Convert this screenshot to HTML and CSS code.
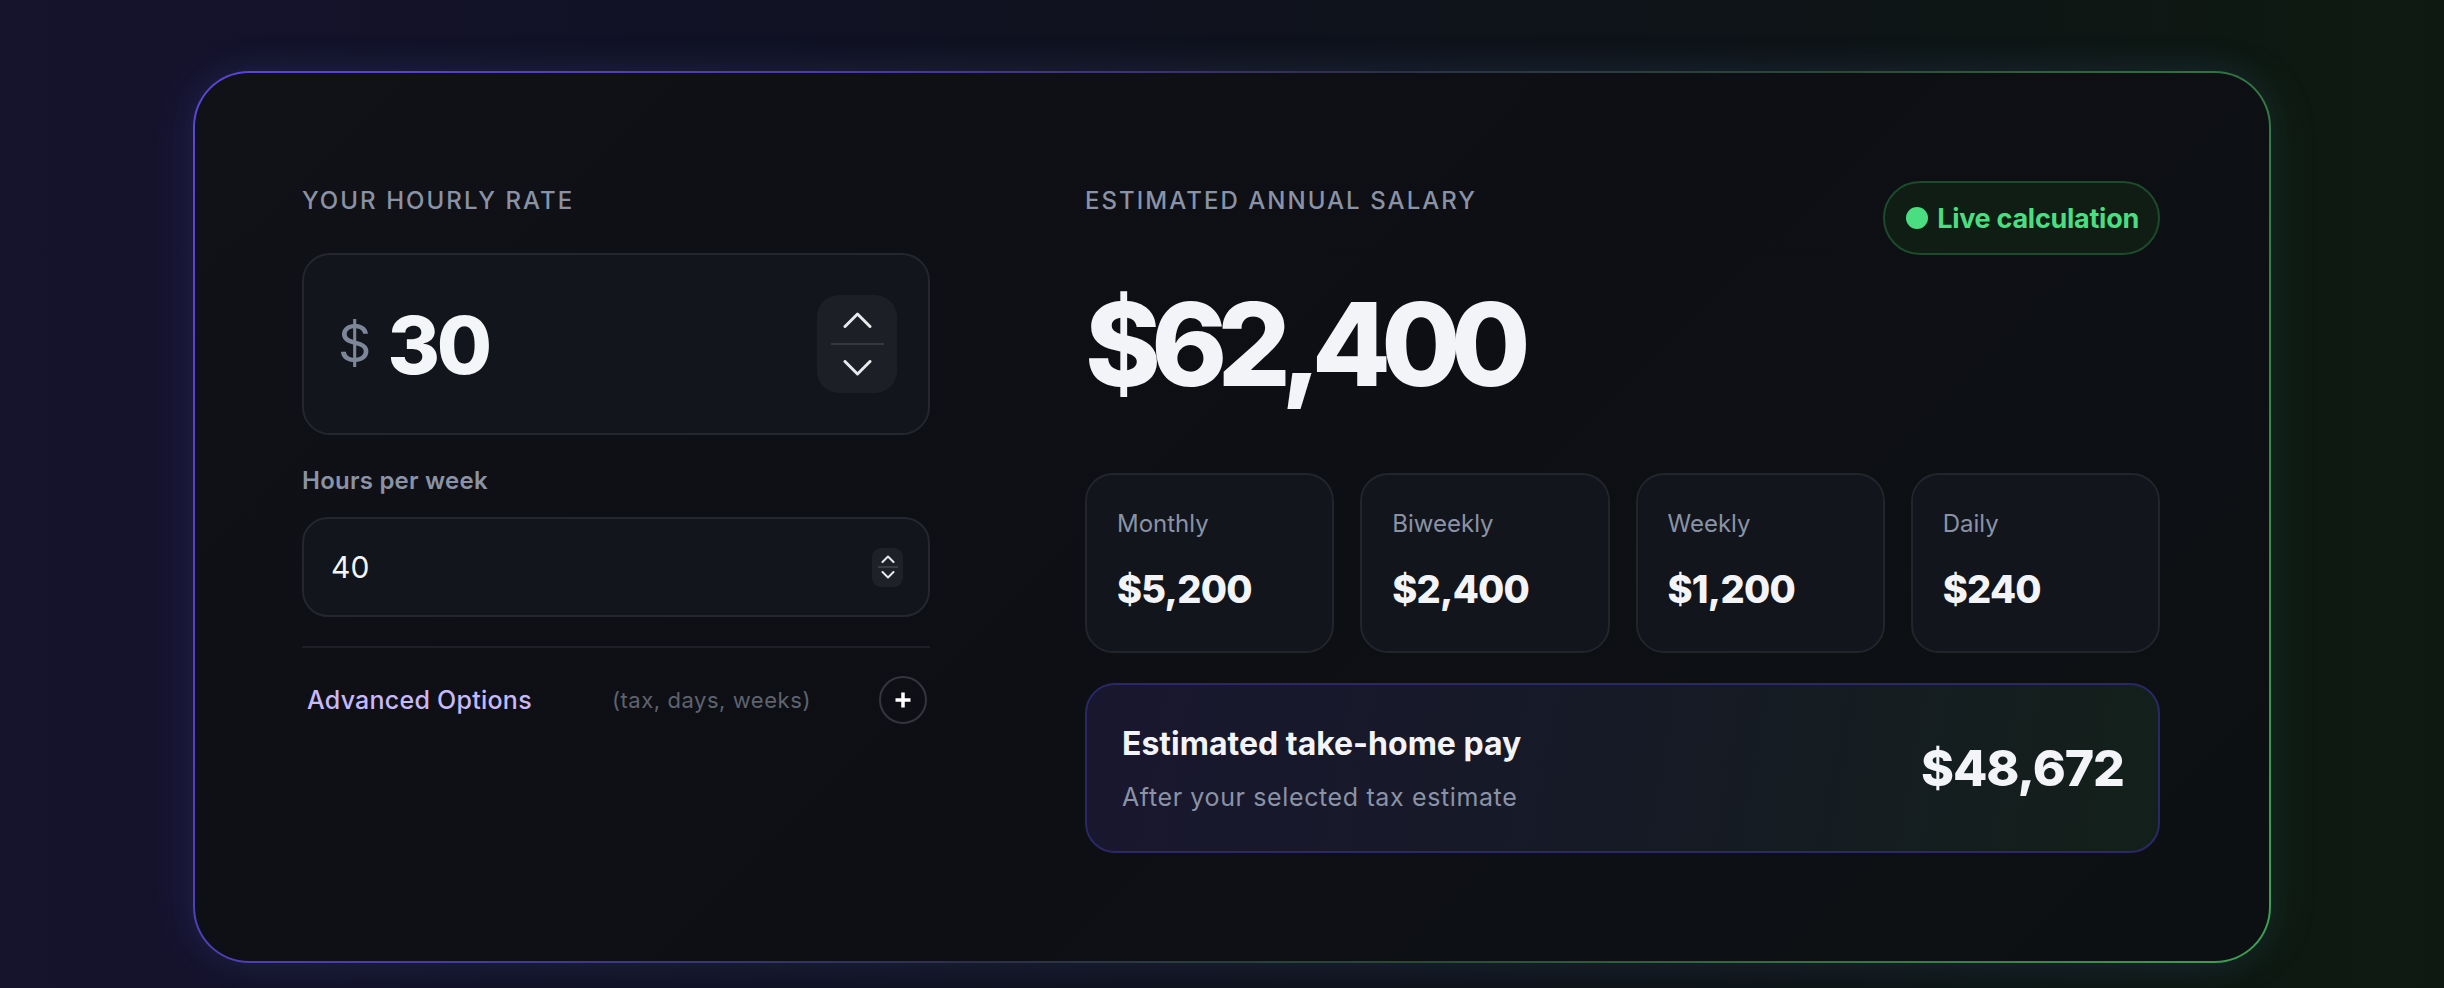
FILE: index.html
```html
<!DOCTYPE html>
<html lang="en">
<head>
    <meta charset="UTF-8">
    <meta name="viewport" content="width=device-width, initial-scale=1.0">
    <title>Hourly to Salary Calculator</title>
    <link rel="stylesheet" href="styles.css">
</head>
<body>
    <div class="page">
        <main class="calc-card">
            <section class="inputs">
                <div class="field-label">Your hourly rate</div>
                <div class="rate-box">
                    <span class="rate-currency">$</span>
                    <input class="rate-input" id="rate" type="text" value="30">
                    <div class="stepper">
                        <button class="step-btn" aria-label="Increase rate">
                            <svg width="29" height="16" viewBox="0 0 29 16"><path d="M2 14.5 L14.5 2 L27 14.5" /></svg>
                        </button>
                        <span class="step-divider"></span>
                        <button class="step-btn" aria-label="Decrease rate">
                            <svg width="29" height="16" viewBox="0 0 29 16"><path d="M2 1.5 L14.5 14 L27 1.5" /></svg>
                        </button>
                    </div>
                </div>

                <label class="hours-label" for="hours">Hours per week</label>
                <div class="hours-box">
                    <input class="hours-input" id="hours" type="text" value="40">
                    <div class="mini-stepper">
                        <svg width="14" height="8" viewBox="0 0 14 8"><path d="M1.5 7 L7 1.5 L12.5 7" /></svg>
                        <span class="mini-divider"></span>
                        <svg width="14" height="8" viewBox="0 0 14 8"><path d="M1.5 1 L7 6.5 L12.5 1" /></svg>
                    </div>
                </div>

                <div class="divider"></div>

                <div class="advanced-row">
                    <span class="advanced-title">Advanced Options</span>
                    <span class="advanced-hint">(tax, days, weeks)</span>
                    <button class="toggle-btn" aria-label="Show advanced options">
                        <svg width="18" height="18" viewBox="0 0 18 18"><path d="M9 1.5 V16.5 M1.5 9 H16.5" /></svg>
                    </button>
                </div>
            </section>

            <section class="results">
                <div class="results-head">
                    <div class="field-label">Estimated annual salary</div>
                    <div class="live-badge"><span class="live-dot"></span>Live calculation</div>
                </div>

                <div class="annual" id="annual">$62,400</div>

                <div class="breakdown">
                    <div class="stat">
                        <div class="stat-label">Monthly</div>
                        <div class="stat-value" id="monthly">$5,200</div>
                    </div>
                    <div class="stat">
                        <div class="stat-label">Biweekly</div>
                        <div class="stat-value" id="biweekly">$2,400</div>
                    </div>
                    <div class="stat">
                        <div class="stat-label">Weekly</div>
                        <div class="stat-value" id="weekly">$1,200</div>
                    </div>
                    <div class="stat">
                        <div class="stat-label">Daily</div>
                        <div class="stat-value" id="daily">$240</div>
                    </div>
                </div>

                <div class="takehome">
                    <div class="takehome-text">
                        <div class="takehome-title">Estimated take-home pay</div>
                        <div class="takehome-sub">After your selected tax estimate</div>
                    </div>
                    <div class="takehome-amount" id="takehome">$48,672</div>
                </div>
            </section>
        </main>
    </div>
</body>
</html>
```

FILE: styles.css
```css
body {
    margin: 0;
    min-height: 988px;
    font-family: "Inter", "Noto Sans", sans-serif;
    background: linear-gradient(90deg, #16132d 0%, #131229 18%, #10121f 45%, #0e1417 72%, #0e1a11 100%);
    color: #f3f4f8;
}
.page {
    padding: 71px 0 25px 193px;
}
.calc-card {
    width: 2078px;
    height: 892px;
    box-sizing: border-box;
    border: 2px solid transparent;
    border-radius: 56px;
    background:
        linear-gradient(135deg, #111118 0%, #0d0f14 50%, #0d1013 100%) padding-box,
        linear-gradient(115deg, #5b46dc 0%, #4a3ca8 25%, #2c2f48 48%, #2a4a34 66%, #3da253 100%) border-box;
    box-shadow: -10px 0 40px rgba(88, 70, 220, 0.14), 10px 0 40px rgba(60, 160, 80, 0.1);
    padding: 108px 109px 0 107px;
    display: grid;
    grid-template-columns: 628px 1075px;
    column-gap: 155px;
    align-items: start;
}
button {
    font: inherit;
    cursor: pointer;
}
input {
    font-family: inherit;
}

/* shared uppercase heading */
.field-label {
    padding-top: 5px;
    font-size: 24px;
    line-height: 30px;
    font-weight: 500;
    letter-spacing: 0.085em;
    text-transform: uppercase;
    color: #8a93a6;
}

/* left column */
.rate-box {
    margin-top: 37px;
    height: 182px;
    box-sizing: border-box;
    border: 2px solid #24272e;
    border-radius: 28px;
    background: #12151b;
    padding: 0 31px 0 34px;
    display: flex;
    align-items: center;
    gap: 16px;
}
.rate-currency {
    font-size: 52px;
    line-height: 1;
    color: #7e879a;
}
.rate-input {
    flex: 1;
    min-width: 0;
    background: none;
    border: none;
    outline: none;
    padding: 0;
    font-size: 80px;
    font-weight: 800;
    letter-spacing: -0.04em;
    color: #f4f5f9;
}
.stepper {
    width: 80px;
    height: 98px;
    border-radius: 22px;
    background: #1c1f25;
    display: flex;
    flex-direction: column;
    align-items: center;
    justify-content: center;
    gap: 15px;
}
.step-btn {
    background: none;
    border: none;
    padding: 0;
    display: flex;
}
.step-btn svg path, .mini-stepper svg path, .toggle-btn svg path {
    fill: none;
    stroke: #e8e9ec;
    stroke-linecap: round;
    stroke-linejoin: round;
}
.step-btn svg path {
    stroke-width: 3;
}
.step-divider {
    width: 53px;
    height: 2px;
    background: #34373e;
}
.hours-label {
    display: block;
    margin-top: 31px;
    font-size: 24px;
    line-height: 30px;
    font-weight: 600;
    letter-spacing: 0.01em;
    color: #8a93a6;
}
.hours-box {
    margin-top: 21px;
    height: 100px;
    box-sizing: border-box;
    border: 2px solid #24272e;
    border-radius: 26px;
    background: #12151b;
    padding: 0 25px 0 27px;
    display: flex;
    align-items: center;
}
.hours-input {
    flex: 1;
    min-width: 0;
    background: none;
    border: none;
    outline: none;
    padding: 0;
    font-size: 30px;
    color: #f4f5f9;
}
.mini-stepper {
    width: 31px;
    height: 39px;
    border-radius: 9px;
    background: #1e2128;
    display: flex;
    flex-direction: column;
    align-items: center;
    justify-content: center;
    gap: 3px;
}
.mini-stepper svg path {
    stroke-width: 2;
}
.mini-divider {
    width: 20px;
    height: 2px;
    background: #3a3d44;
}
.divider {
    margin-top: 29px;
    height: 2px;
    background: #1c1f25;
}
.advanced-row {
    margin-top: 28px;
    height: 48px;
    padding: 0 3px 0 5px;
    display: flex;
    align-items: center;
}
.advanced-title {
    font-size: 25px;
    font-weight: 500;
    letter-spacing: 0.01em;
    color: #c8b9fb;
}
.advanced-hint {
    margin-left: 80px;
    font-size: 22px;
    letter-spacing: 0.025em;
    color: #5e636e;
}
.toggle-btn {
    margin-left: auto;
    width: 48px;
    height: 48px;
    border-radius: 50%;
    border: 2px solid #33363d;
    background: transparent;
    padding: 0;
    display: flex;
    align-items: center;
    justify-content: center;
}
.toggle-btn svg path {
    stroke: #ffffff;
    stroke-width: 3.5;
    stroke-linecap: butt;
}

/* right column */
.results-head {
    display: flex;
    justify-content: space-between;
    align-items: flex-start;
}
.live-badge {
    height: 74px;
    box-sizing: border-box;
    border: 2px solid #1d4a2a;
    border-radius: 37px;
    background: #0f1d15;
    padding: 0 19px 0 21px;
    display: flex;
    align-items: center;
    gap: 9px;
    font-size: 27px;
    font-weight: 700;
    letter-spacing: -0.01em;
    color: #4ade80;
}
.live-dot {
    width: 22px;
    height: 22px;
    border-radius: 50%;
    background: #4ade80;
}
.annual {
    margin-top: 32px;
    font-size: 115px;
    line-height: 115px;
    font-weight: 800;
    letter-spacing: -0.085em;
    color: #f3f4f8;
}
.breakdown {
    margin-top: 71px;
    display: grid;
    grid-template-columns: repeat(4, 1fr);
    gap: 26px;
}
.stat {
    height: 180px;
    box-sizing: border-box;
    border: 2px solid #22252c;
    border-radius: 28px;
    background: #12151b;
    padding: 34px 30px 0;
}
.stat-label {
    font-size: 24px;
    line-height: 30px;
    color: #8a93a6;
}
.stat-value {
    margin-top: 27px;
    font-size: 38px;
    line-height: 46px;
    font-weight: 800;
    letter-spacing: -0.02em;
    color: #f3f4f8;
}
.takehome {
    margin-top: 30px;
    height: 170px;
    box-sizing: border-box;
    border: 2px solid #2a2866;
    border-radius: 30px;
    background: linear-gradient(100deg, #19172f 0%, #161a26 50%, #13201a 100%);
    padding: 0 34px 0 35px;
    display: flex;
    justify-content: space-between;
    align-items: center;
}
.takehome-title {
    font-size: 32px;
    line-height: 38px;
    font-weight: 700;
    color: #f3f4f8;
}
.takehome-sub {
    margin-top: 19px;
    font-size: 25px;
    line-height: 30px;
    letter-spacing: 0.025em;
    color: #8a93a6;
}
.takehome-amount {
    font-size: 50px;
    font-weight: 800;
    letter-spacing: -0.02em;
    color: #f3f4f8;
}
```
